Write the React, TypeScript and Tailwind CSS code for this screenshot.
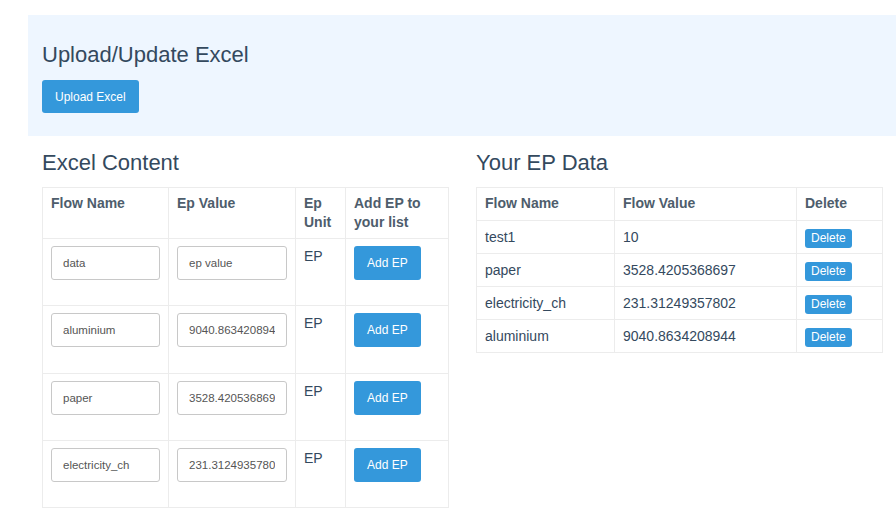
const excelRows = [
  { name: 'data', value: '', placeholder: 'ep value' },
  { name: 'aluminium', value: '9040.8634208944' },
  { name: 'paper', value: '3528.4205368697' },
  { name: 'electricity_ch', value: '231.31249357802' },
]

const epData = [
  { name: 'test1', value: '10' },
  { name: 'paper', value: '3528.4205368697' },
  { name: 'electricity_ch', value: '231.31249357802' },
  { name: 'aluminium', value: '9040.8634208944' },
]

function Th({ children, className = 'pb-[6px]' }: { children: React.ReactNode; className?: string }) {
  return (
    <th className={`border border-[#ececec] px-[8px] pt-[6px] text-left align-top font-bold leading-[19px] text-[#4e5d6c] ${className}`}>
      {children}
    </th>
  )
}

export default function App() {
  return (
    <div className="min-h-screen bg-white pl-[28px] pt-[15px] text-[14px] text-[#34495e]" style={{ fontFamily: '"Liberation Sans", Arial, sans-serif' }}>
      {/* Upload band */}
      <section className="h-[121px] bg-[#eef6ff] px-[14px] pt-[28px]">
        <h1 className="text-[22px] leading-[24px] font-normal">Upload/Update Excel</h1>
        <button className="mt-[13px] h-[33px] rounded-[3px] bg-[#3498db] px-[13px] text-[12px] text-white">
          Upload Excel
        </button>
      </section>

      <div className="grid grid-cols-2">
        {/* Excel content */}
        <section className="px-[14px] pt-[15px]">
          <h2 className="mb-[12px] text-[22px] leading-[24px] font-normal">Excel Content</h2>
          <table className="w-[406px] table-fixed border-collapse">
            <colgroup>
              <col className="w-[126px]" />
              <col className="w-[127px]" />
              <col className="w-[50px]" />
              <col className="w-[103px]" />
            </colgroup>
            <thead>
              <tr>
                <Th>Flow Name</Th>
                <Th>Ep Value</Th>
                <Th>Ep Unit</Th>
                <Th>Add EP to your list</Th>
              </tr>
            </thead>
            <tbody>
              {excelRows.map((row) => (
                <tr key={row.name}>
                  <td className="border border-[#ececec] px-[8px] pt-[7px] pb-[25.25px] align-top">
                    <input
                      readOnly
                      value={row.name}
                      className="h-[34px] w-full rounded-[3px] border border-[#c8c8c8] px-[11px] text-[11.5px] text-[#555] outline-none"
                    />
                  </td>
                  <td className="border border-[#ececec] px-[8px] pt-[7px] pb-[25.25px] align-top">
                    <input
                      readOnly
                      value={row.value}
                      placeholder={row.placeholder}
                      className="h-[34px] w-full rounded-[3px] border border-[#c8c8c8] px-[11px] text-[11.5px] text-[#555] outline-none placeholder:text-[#555]"
                    />
                  </td>
                  <td className="border border-[#ececec] px-[8px] pt-[7px] pb-[25.25px] align-top leading-[20px]">EP</td>
                  <td className="border border-[#ececec] px-[8px] pt-[7px] pb-[25.25px] align-top">
                    <button className="h-[34px] rounded-[3px] bg-[#3498db] px-[13px] text-[12px] text-white">Add EP</button>
                  </td>
                </tr>
              ))}
            </tbody>
          </table>
        </section>

        {/* EP data */}
        <section className="px-[14px] pt-[15px]">
          <h2 className="mb-[12px] text-[22px] leading-[24px] font-normal">Your EP Data</h2>
          <table className="w-[406px] table-fixed border-collapse">
            <colgroup>
              <col className="w-[138px]" />
              <col className="w-[182px]" />
              <col className="w-[86px]" />
            </colgroup>
            <thead>
              <tr>
                <Th className="pb-[7px]">Flow Name</Th>
                <Th className="pb-[7px]">Flow Value</Th>
                <Th className="pb-[7px]">Delete</Th>
              </tr>
            </thead>
            <tbody>
              {epData.map((row) => (
                <tr key={row.name}>
                  <td className="border border-[#ececec] px-[8px] pt-[7px] pb-[6px] leading-[19px]">{row.name}</td>
                  <td className="border border-[#ececec] px-[8px] pt-[7px] pb-[6px] leading-[19px]">{row.value}</td>
                  <td className="border border-[#ececec] px-[8px] pt-[7px] pb-[6px] leading-[19px]">
                    <button className="block h-[19px] translate-y-[1px] rounded-[3px] bg-[#3498db] px-[6px] text-[12px] leading-[19px] text-white">
                      Delete
                    </button>
                  </td>
                </tr>
              ))}
            </tbody>
          </table>
        </section>
      </div>
    </div>
  )
}
